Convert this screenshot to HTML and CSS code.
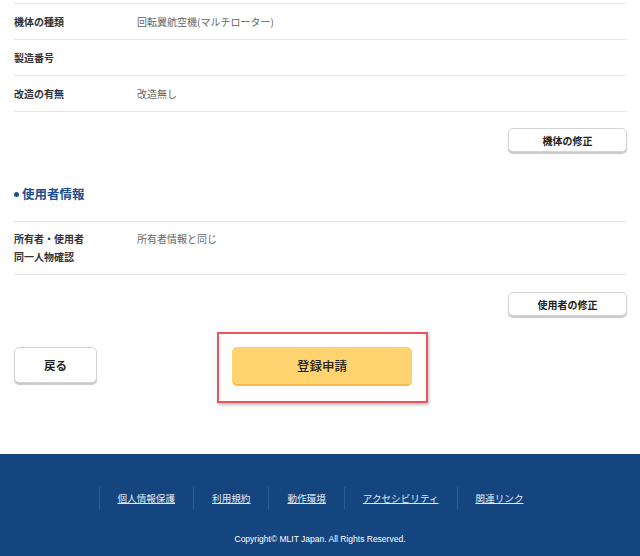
FILE: index.html
```html
<!DOCTYPE html>
<html lang="ja">
<head>
<meta charset="utf-8">
<title>登録申請</title>
<link rel="stylesheet" href="styles.css">
</head>
<body>
<main class="page">
  <section class="table first">
    <div class="row"><div class="label">機体の種類</div><div class="value">回転翼航空機(マルチローター)</div></div>
    <div class="row"><div class="label">製造番号</div><div class="value"></div></div>
    <div class="row"><div class="label">改造の有無</div><div class="value">改造無し</div></div>
  </section>
  <div class="edit-wrap edit-1"><button class="btn edit">機体の修正</button></div>

  <h2 class="heading"><span class="dot"></span>使用者情報</h2>

  <section class="table">
    <div class="row tall"><div class="label">所有者・使用者<br>同一人物確認</div><div class="value">所有者情報と同じ</div></div>
  </section>
  <div class="edit-wrap edit-2"><button class="btn edit">使用者の修正</button></div>

  <div class="actions">
    <button class="btn back">戻る</button>
    <div class="highlight"><button class="btn submit">登録申請</button></div>
  </div>
</main>
<footer class="footer">
  <nav class="links">
    <a href="#">個人情報保護</a>
    <a href="#">利用規約</a>
    <a href="#">動作環境</a>
    <a href="#">アクセシビリティ</a>
    <a href="#" class="last">関連リンク</a>
  </nav>
  <p class="copy">Copyright© MLIT Japan. All Rights Reserved.</p>
</footer>
</body>
</html>
```
FILE: styles.css
```css
* { box-sizing: border-box; }
html, body { margin: 0; padding: 0; }
body {
  width: 640px;
  height: 556px;
  overflow: hidden;
  background: #fff;
  font-family: "Noto Sans CJK JP", "Liberation Sans", sans-serif;
  color: #333;
}
.page { padding: 3px 13px 0 14px; }
.table { border-top: 1px solid #e6e6e6; }
.row {
  display: flex;
  align-items: center;
  height: 36px;
  border-bottom: 1px solid #e6e6e6;
  font-size: 10px;
}
.row.tall { height: 53px; align-items: flex-start; padding-top: 8px; line-height: 18px; }
.label { width: 123px; font-weight: bold; color: #333; }
.value { color: #666; }
.edit-wrap { display: flex; justify-content: flex-end; }
.edit-1 { margin-top: 16px; }
.edit-2 { margin-top: 17px; }
.btn {
  font-family: "Noto Sans CJK JP", "Liberation Sans", sans-serif;
  background: #fff;
  border: 1px solid #d4d4d4;
  border-radius: 5px;
  box-shadow: 0 2px 1px #c9c9c9;
  color: #222;
  font-weight: bold;
  cursor: pointer;
  padding: 0;
}
.edit { width: 119px; height: 24px; font-size: 10px; }
.heading {
  margin: 32px 0 17px;
  height: 20px;
  line-height: 20px;
  font-size: 12.5px;
  font-weight: bold;
  color: #1d4f91;
  display: flex;
  align-items: center;
}
.dot {
  width: 5px; height: 5px; border-radius: 50%;
  background: #1d4f91;
  margin-right: 3px;
}
.actions {
  display: flex;
  align-items: flex-start;
  margin-top: 16px;
}
.back {
  width: 83px; height: 36px;
  margin-top: 15px;
  font-size: 11.5px;
}
.highlight {
  margin-left: 120px;
  padding: 13px 14px 15px 13px;
  border: 2px solid #ee5358;
  box-shadow: 1px 2px 3px rgba(0,0,0,0.25);
}
.submit {
  width: 180px; height: 39px;
  background: #fed370;
  border: none;
  border-bottom: 2px solid #f2bb4b;
  box-shadow: none;
  font-size: 12.5px;
  font-weight: 500;
  color: #222;
}
.footer {
  position: absolute;
  left: 0; top: 454px;
  width: 640px; height: 102px;
  background: #14457f;
  color: #fff;
}
.links {
  display: flex;
  justify-content: center;
  margin-top: 33px;
}
.links a {
  font-size: 9.6px;
  line-height: 22px;
  color: #e3e9f2;
  text-decoration: underline;
  padding: 0 18px;
  border-left: 1px solid #2e5b91;
}
.copy {
  margin: 25px 0 0;
  text-align: center;
  font-size: 8.5px;
  font-family: "Liberation Sans", "Noto Sans CJK JP", sans-serif;
  color: #fff;
}
```
